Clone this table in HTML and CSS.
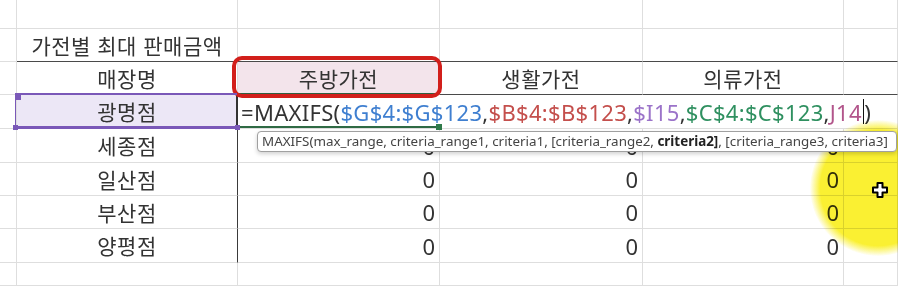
FILE: index.html
```html
<!DOCTYPE html>
<html lang="ko">
<head>
<meta charset="utf-8">
<link rel="stylesheet" href="styles.css">
</head>
<body>
<div class="sheet">
  <div class="c"></div><div class="c"></div><div class="c"></div><div class="c"></div><div class="c"></div><div class="c"></div>

  <div class="c"></div><div class="c ctr dark-b">가전별 최대 판매금액</div><div class="c dark-b"></div><div class="c dark-b"></div><div class="c dark-b"></div><div class="c dark-b"></div>

  <div class="c"></div><div class="c ctr">매장명</div><div class="c ctr pink dark-b">주방가전</div><div class="c ctr dark-b">생활가전</div><div class="c ctr dark-b">의류가전</div><div class="c dark-b"></div>

  <div class="c"></div><div class="c ctr sel dark-r">광명점</div>
  <div class="c formula"><span class="k">=MAXIFS(</span><span class="blue">$G$4:$G$123</span><span class="k">,</span><span class="red">$B$4:$B$123</span><span class="k">,</span><span class="purple">$I15</span><span class="k">,</span><span class="green">$C$4:$C$123</span><span class="k">,</span><span class="plum">J14</span><span class="caret"></span><span class="k">)</span></div>

  <div class="c"></div><div class="c ctr dark-r">세종점</div><div class="c num">0</div><div class="c num">0</div><div class="c num">0</div><div class="c"></div>
  <div class="c"></div><div class="c ctr dark-r">일산점</div><div class="c num">0</div><div class="c num">0</div><div class="c num">0</div><div class="c"></div>
  <div class="c"></div><div class="c ctr dark-r">부산점</div><div class="c num">0</div><div class="c num">0</div><div class="c num">0</div><div class="c"></div>
  <div class="c"></div><div class="c ctr dark-r">양평점</div><div class="c num">0</div><div class="c num">0</div><div class="c num">0</div><div class="c"></div>

  <div class="c"></div><div class="c"></div><div class="c"></div><div class="c"></div><div class="c"></div><div class="c"></div>

  <div class="active"></div>
  <div class="redbox"></div>
  <div class="glow"></div>
  <div class="tip">MAXIFS(max_range, criteria_range1, criteria1, [criteria_range2, <b>criteria2]</b>, [criteria_range3, criteria3]</div>
  <svg class="cursor" width="18" height="18" viewBox="0 0 18 18"><path d="M6.5 2h5v4.5H16v5h-4.5V16h-5v-4.5H2v-5h4.5z" fill="#fff" stroke="#000" stroke-width="2" stroke-linejoin="round"/></svg>
</div>
</body>
</html>
```

FILE: styles.css
```css
html, body {
  margin: 0;
  padding: 0;
  background: #fff;
}
.sheet {
  position: relative;
  width: 898px;
  height: 286px;
  overflow: hidden;
  display: grid;
  grid-template-columns: 17px 221px 202px 203px 201px 1fr;
  grid-template-rows: 29px 33px 33px 34px 34px 33px 33px 34px 1fr;
  font-family: "Noto Sans", "Noto Sans CJK KR", sans-serif;
  color: #333;
}
.c {
  box-sizing: border-box;
  border-right: 1px solid #dedede;
  border-bottom: 1px solid #dedede;
  display: flex;
  align-items: center;
  font-size: 21px;
  white-space: nowrap;
  min-width: 0;
}
.ctr {
  justify-content: center;
  font-family: "Noto Sans CJK KR", sans-serif;
  font-size: 21px;
  letter-spacing: 0.5px;
  padding-bottom: 1px;
}
.num {
  justify-content: flex-end;
  padding-right: 4px;
  font-size: 22px;
  color: #333;
}
.dark-b { border-bottom-color: #4a4a4a; }
.dark-r { border-right-color: #3a3a3a; }
.pink { background: #f3e4eb; }
.sel {
  background: #ece7f6;
  border-bottom: 2px solid #7a58b8;
}
.formula {
  grid-column: span 4;
  background: #fff;
  padding-left: 3px;
  font-size: 22px;
  letter-spacing: 0.3px;
  overflow: visible;
}
.k { color: #333; }
.blue { color: #3f7fd0; }
.red { color: #c44f4c; }
.purple { color: #9b73c9; }
.green { color: #2f9060; }
.plum { color: #b2558b; }
.caret {
  display: inline-block;
  width: 1.5px;
  height: 25px;
  background: #111;
  margin: 0 0 0 1px;
}
.active {
  position: absolute;
  left: 236px;
  top: 93px;
  width: 203px;
  height: 35px;
  box-sizing: border-box;
  border-top: 2px solid #2f5f3f;
  border-bottom: 2px solid #2f6a44;
  border-left: 2px solid #333;
}
.active::after {
  content: "";
  position: absolute;
  right: -3px;
  bottom: -4px;
  width: 6px;
  height: 6px;
  background: #2f7a4a;
}
.sheet::before {
  content: "";
  position: absolute;
  left: 15px;
  top: 93px;
  width: 222px;
  height: 35px;
  box-sizing: border-box;
  border: 2px solid #7a58b8;
  border-left-width: 1.5px;
  border-right: none;
  pointer-events: none;
  background:
    linear-gradient(#7a58b8, #7a58b8) 0 0 / 5px 5px no-repeat;
  z-index: 2;
}
.sheet::after {
  content: "";
  position: absolute;
  left: 13px;
  top: 125px;
  width: 227px;
  height: 6px;
  background:
    linear-gradient(#7a58b8, #7a58b8) 0 0 / 5px 5px no-repeat,
    linear-gradient(#7a58b8, #7a58b8) 100% 0 / 5px 5px no-repeat;
  z-index: 2;
}
.redbox {
  position: absolute;
  left: 232px;
  top: 56px;
  width: 210px;
  height: 42px;
  box-sizing: border-box;
  border: 4px solid #d21f1b;
  border-radius: 10px;
}
.glow {
  position: absolute;
  left: 810px;
  top: 120px;
  width: 136px;
  height: 136px;
  border-radius: 50%;
  mix-blend-mode: multiply;
  background: radial-gradient(circle, rgb(250,240,50) 0%, rgb(250,240,50) 60%, rgba(250,240,50,0) 71%);
}
.tip {
  position: absolute;
  left: 257px;
  top: 131px;
  width: 640px;
  height: 21px;
  box-sizing: border-box;
  background: #fff;
  border: 1px solid #a0a0a0;
  border-radius: 4px;
  box-shadow: 0 2px 4px rgba(0,0,0,0.18);
  font-size: 13.4px;
  line-height: 19px;
  padding-left: 4px;
  color: #444;
  white-space: nowrap;
  overflow: hidden;
  font-family: "Noto Sans", sans-serif;
}
.tip b { color: #222; }
.cursor {
  position: absolute;
  left: 871px;
  top: 181px;
}
```
